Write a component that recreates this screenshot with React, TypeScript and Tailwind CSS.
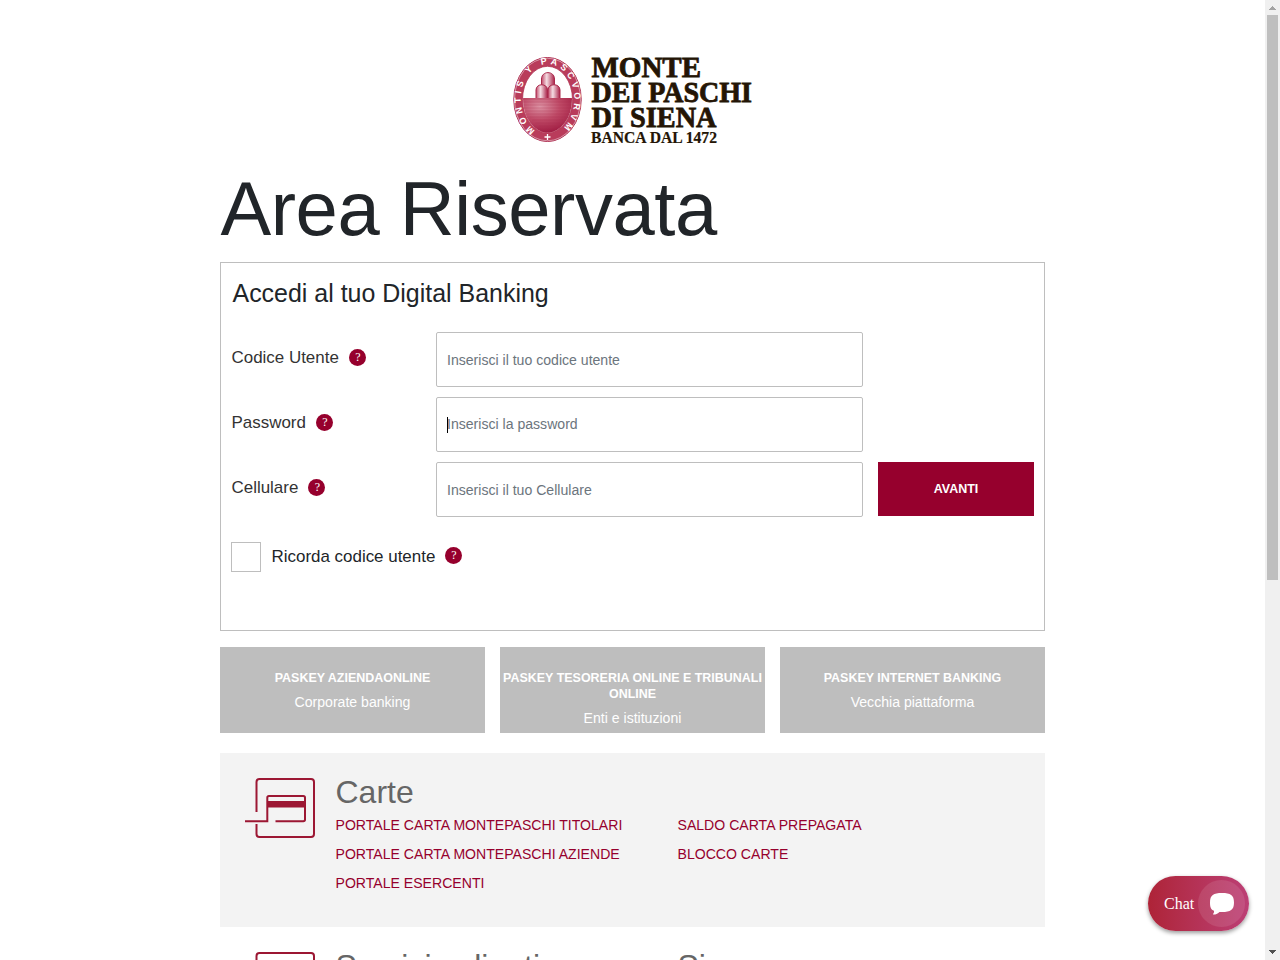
import React from "react";

const ARIAL = "font-['Liberation_Sans',sans-serif]";

function Help() {
  return (
    <span className="flex h-[17px] w-[17px] items-center justify-center rounded-full bg-[#96002d] pl-px font-['Liberation_Serif',serif] text-[12px] leading-[17px] text-white">
      ?
    </span>
  );
}

function Logo() {
  return (
    <svg width="242" height="90" viewBox="511.5 55 242 90" className="block overflow-visible">
      <defs>
        <path id="ring" d="M534.5 130.4 A26.800 35.200 0 1 1 559.5 130.400" />
        <radialGradient id="bowl" cx="0.36" cy="0.25" r="0.75">
          <stop offset="0" stopColor="#dc93a4" />
          <stop offset="0.5" stopColor="#bf4a67" />
          <stop offset="1" stopColor="#a01c42" />
        </radialGradient>
        <linearGradient id="hill" x1="0" x2="1">
          <stop offset="0" stopColor="#c24b6b" />
          <stop offset="0.4" stopColor="#f4dce2" />
          <stop offset="1" stopColor="#aa2349" />
        </linearGradient>
        <clipPath id="inner">
          <ellipse cx="547" cy="99.5" rx="24.5" ry="33" />
        </clipPath>
      </defs>
      <ellipse cx="547" cy="99.5" rx="33.7" ry="42" fill="#b93c5b" stroke="#a9264a" />
      <ellipse cx="547" cy="99.5" rx="33" ry="41.3" fill="none" stroke="#f0d3da" strokeWidth="0.6" />
      <ellipse cx="547" cy="99.5" rx="25" ry="33.2" fill="#fff" stroke="#b0314f" strokeWidth="0.8" />
      <g clipPath="url(#inner)">
        <g fill="url(#hill)" stroke="#a9284b" strokeWidth="1">
          <path d="M541 98 V79 C541 70.500 554 70.500 554 79 V98Z" />
          <path d="M535.500 99 V90 C535.500 83 547 83 547 90 V99Z" />
          <path d="M547.500 99 V90 C547.500 83 559.500 83 559.500 90 V99Z" />
        </g>
        <path d="M520 98 H574 V111 C570 124 560 132 547 133 C533 132 524 122 520 111Z" fill="url(#bowl)" />
        <path
          d="M521 99H573M521 102H573M522 105H572M524 108H570M525 111H569M527 114H567M529 117H565M532 120H562M535 123H559M539 126H555"
          fill="none"
          stroke="#a72a4d"
          strokeWidth="0.5"
          opacity="0.5"
        />
      </g>
      <text fill="#fff" fontFamily="Liberation Sans" fontWeight="700" fontSize="9">
        <textPath href="#ring" textLength="164" lengthAdjust="spacing">MONTIS Y PASCVORVM</textPath>
      </text>
      <path d="M547 134v6M544 137h6" stroke="#fff" strokeWidth="1.3" />
      <g fill="#241505" stroke="#241505" fontFamily="Liberation Serif" fontWeight="700">
        <g fontSize="30" strokeWidth="0.8">
          <text x="591" y="76.700" textLength="109.500" lengthAdjust="spacingAndGlyphs">MONTE</text>
          <text x="591" y="101.700" textLength="160.500" lengthAdjust="spacingAndGlyphs">DEI PASCHI</text>
          <text x="591" y="126.700" textLength="125" lengthAdjust="spacingAndGlyphs">DI SIENA</text>
        </g>
        <text x="590.500" y="142.700" textLength="126" lengthAdjust="spacingAndGlyphs" fontSize="16" strokeWidth="0.200">BANCA DAL 1472</text>
      </g>
    </svg>
  );
}

function Field({ label, placeholder, focused }: { label: string; placeholder: string; focused?: boolean }) {
  return (
    <div className="flex h-[55px]">
      <div className="flex h-[51px] w-[205px] items-center gap-[10px] pl-[0.5px] text-[16.96px] text-[#333]">
        <span>{label}</span>
        <Help />
      </div>
      <div className={`relative flex w-[427px] items-center rounded-[2px] border border-[#bebebe] pl-[10px] text-[14.08px] text-[#6c757d] ${focused ? "pt-px" : "pt-[3px]"}`}>
        {focused && <span className="absolute left-[10px] top-[19px] h-4 w-px bg-black" />}
        <span>{placeholder}</span>
      </div>
    </div>
  );
}

function Tile({ title, sub }: { title: string; sub: string }) {
  return (
    <div className="h-[86px] w-[265px] bg-[#bebebe] pt-[23px] text-center text-white">
      <div className="text-[12.48px] font-bold leading-4">{title}</div>
      <div className="pt-[6px] text-[14.08px] leading-5">{sub}</div>
    </div>
  );
}

function CardIcon() {
  return (
    <svg width="72" height="62" viewBox="0 0 72 62" className="block shrink-0" fill="none" stroke="#9c1733" strokeWidth="2">
      <path d="M12.5 35V5Q12.5 2 15.5 2H67Q70 2 70 5V57Q70 60 67 60H15.5Q12.5 60 12.5 57V47" />
      <path d="M1 44.3H23.3V20.7Q23.3 19 25 19H59.300Q61 19 61 20.700V42.500Q61 44.300 59.300 44.300H31.500" />
      <path d="M23.5 27.3H61" strokeWidth="6.500" />
    </svg>
  );
}

export default function App() {
  return (
    <div className={`flex h-[960px] w-[1280px] overflow-hidden bg-white text-[#212529] ${ARIAL}`}>
      <div className="h-full w-[1265px] overflow-hidden">
        <div className="mx-auto w-[825px]">
          <header className="flex h-[165px] justify-center pt-[55px]">
            <Logo />
          </header>
          <h1 className="h-[97px] whitespace-nowrap pl-[0.5px] text-[76px] leading-[88px] tracking-[-0.46px]">Area Riservata</h1>

          <section className="h-[369px] border border-[#bebebe] px-[10px] pt-[15px]">
            <h2 className="h-[54px] pl-[1.5px] text-[24.96px] leading-[30px]">Accedi al tuo Digital Banking</h2>
            <div className="flex items-end justify-between">
              <div className="flex flex-col gap-[10px]">
                <Field label="Codice Utente" placeholder="Inserisci il tuo codice utente" />
                <Field label="Password" placeholder="Inserisci la password" focused />
                <Field label="Cellulare" placeholder="Inserisci il tuo Cellulare" />
              </div>
              <button type="button" className="mb-px h-[54px] w-[156px] bg-[#96002d] text-[12.48px] font-bold text-white">
                AVANTI
              </button>
            </div>
            <div className="flex items-center pt-[25px] text-[16.96px]">
              <span className="h-[30px] w-[30px] border border-[#bebebe]" />
              <span className="pl-[10.5px] pr-[9.500px]">Ricorda codice utente</span>
              <span className="pb-[3px]">
                <Help />
              </span>
            </div>
          </section>

          <section className="mt-4 flex justify-between">
            <Tile title="PASKEY AZIENDAONLINE" sub="Corporate banking" />
            <Tile title="PASKEY TESORERIA ONLINE E TRIBUNALI ONLINE" sub="Enti e istituzioni" />
            <Tile title="PASKEY INTERNET BANKING" sub="Vecchia piattaforma" />
          </section>

          <section className="mt-5 flex h-[174px] bg-[#f3f3f3] pl-6 pt-6">
            <CardIcon />
            <div className="pl-[19.5px]">
              <h3 className="h-[34px] text-[32px] leading-[30px] text-[#666]">Carte</h3>
              <div className="flex text-[14.08px] leading-[29px] text-[#96002d]">
                <div className="w-[342px]">
                  <div>PORTALE CARTA MONTEPASCHI TITOLARI</div>
                  <div>PORTALE CARTA MONTEPASCHI AZIENDE</div>
                  <div>PORTALE ESERCENTI</div>
                </div>
                <div>
                  <div>SALDO CARTA PREPAGATA</div>
                  <div>BLOCCO CARTE</div>
                </div>
              </div>
            </div>
          </section>

          <section className="flex h-[174px] pl-6 pt-6">
            <CardIcon />
            <div className="flex pl-[19.5px] text-[32px] leading-[30px] text-[#666]">
              <h3 className="w-[342px]">Servizi salienti</h3>
              <h3>Sicurezza</h3>
            </div>
          </section>
        </div>
      </div>

      <div className="flex h-full w-[15px] flex-col items-center bg-[#f0f0f0]">
        <svg width="15" height="15" viewBox="0 0 15 15" shapeRendering="crispEdges">
          <path d="M4 10 7.5 6 11 10Z" fill="#a3a3a3" />
        </svg>
        <div className="h-[565px] w-[11px] bg-[#bfbfbf]" />
        <div className="flex-1" />
        <svg width="15" height="15" viewBox="0 0 15 15" shapeRendering="crispEdges">
          <path d="M4 5 7.5 9 11 5Z" fill="#505050" />
        </svg>
      </div>

      <div className="absolute left-[1148px] top-[876px] flex h-[55px] w-[101px] items-center justify-between rounded-full bg-linear-to-r from-[#ae2337] to-[#bc3f75] pl-4 pr-1 font-['Liberation_Serif',serif] text-[16px] text-white shadow-[0_2px_4px_rgba(0,0,0,0.4)]">
        <span>Chat</span>
        <span className="flex h-[47px] w-[47px] items-center justify-center rounded-full bg-white/10 pt-px">
          <svg width="24" height="22" viewBox="0 0 24 22" fill="#fff">
            <path d="M12 0C3.500 0 0 2 0 9.500C0 14.500 1 16.500 4 17.800C4.200 19.500 3.600 20.500 2.800 21C3.500 22.300 6.500 21.500 9.500 19H12C20.500 19 24 17 24 9.500C24 2 20.500 0 12 0Z" />
          </svg>
        </span>
      </div>
    </div>
  );
}
